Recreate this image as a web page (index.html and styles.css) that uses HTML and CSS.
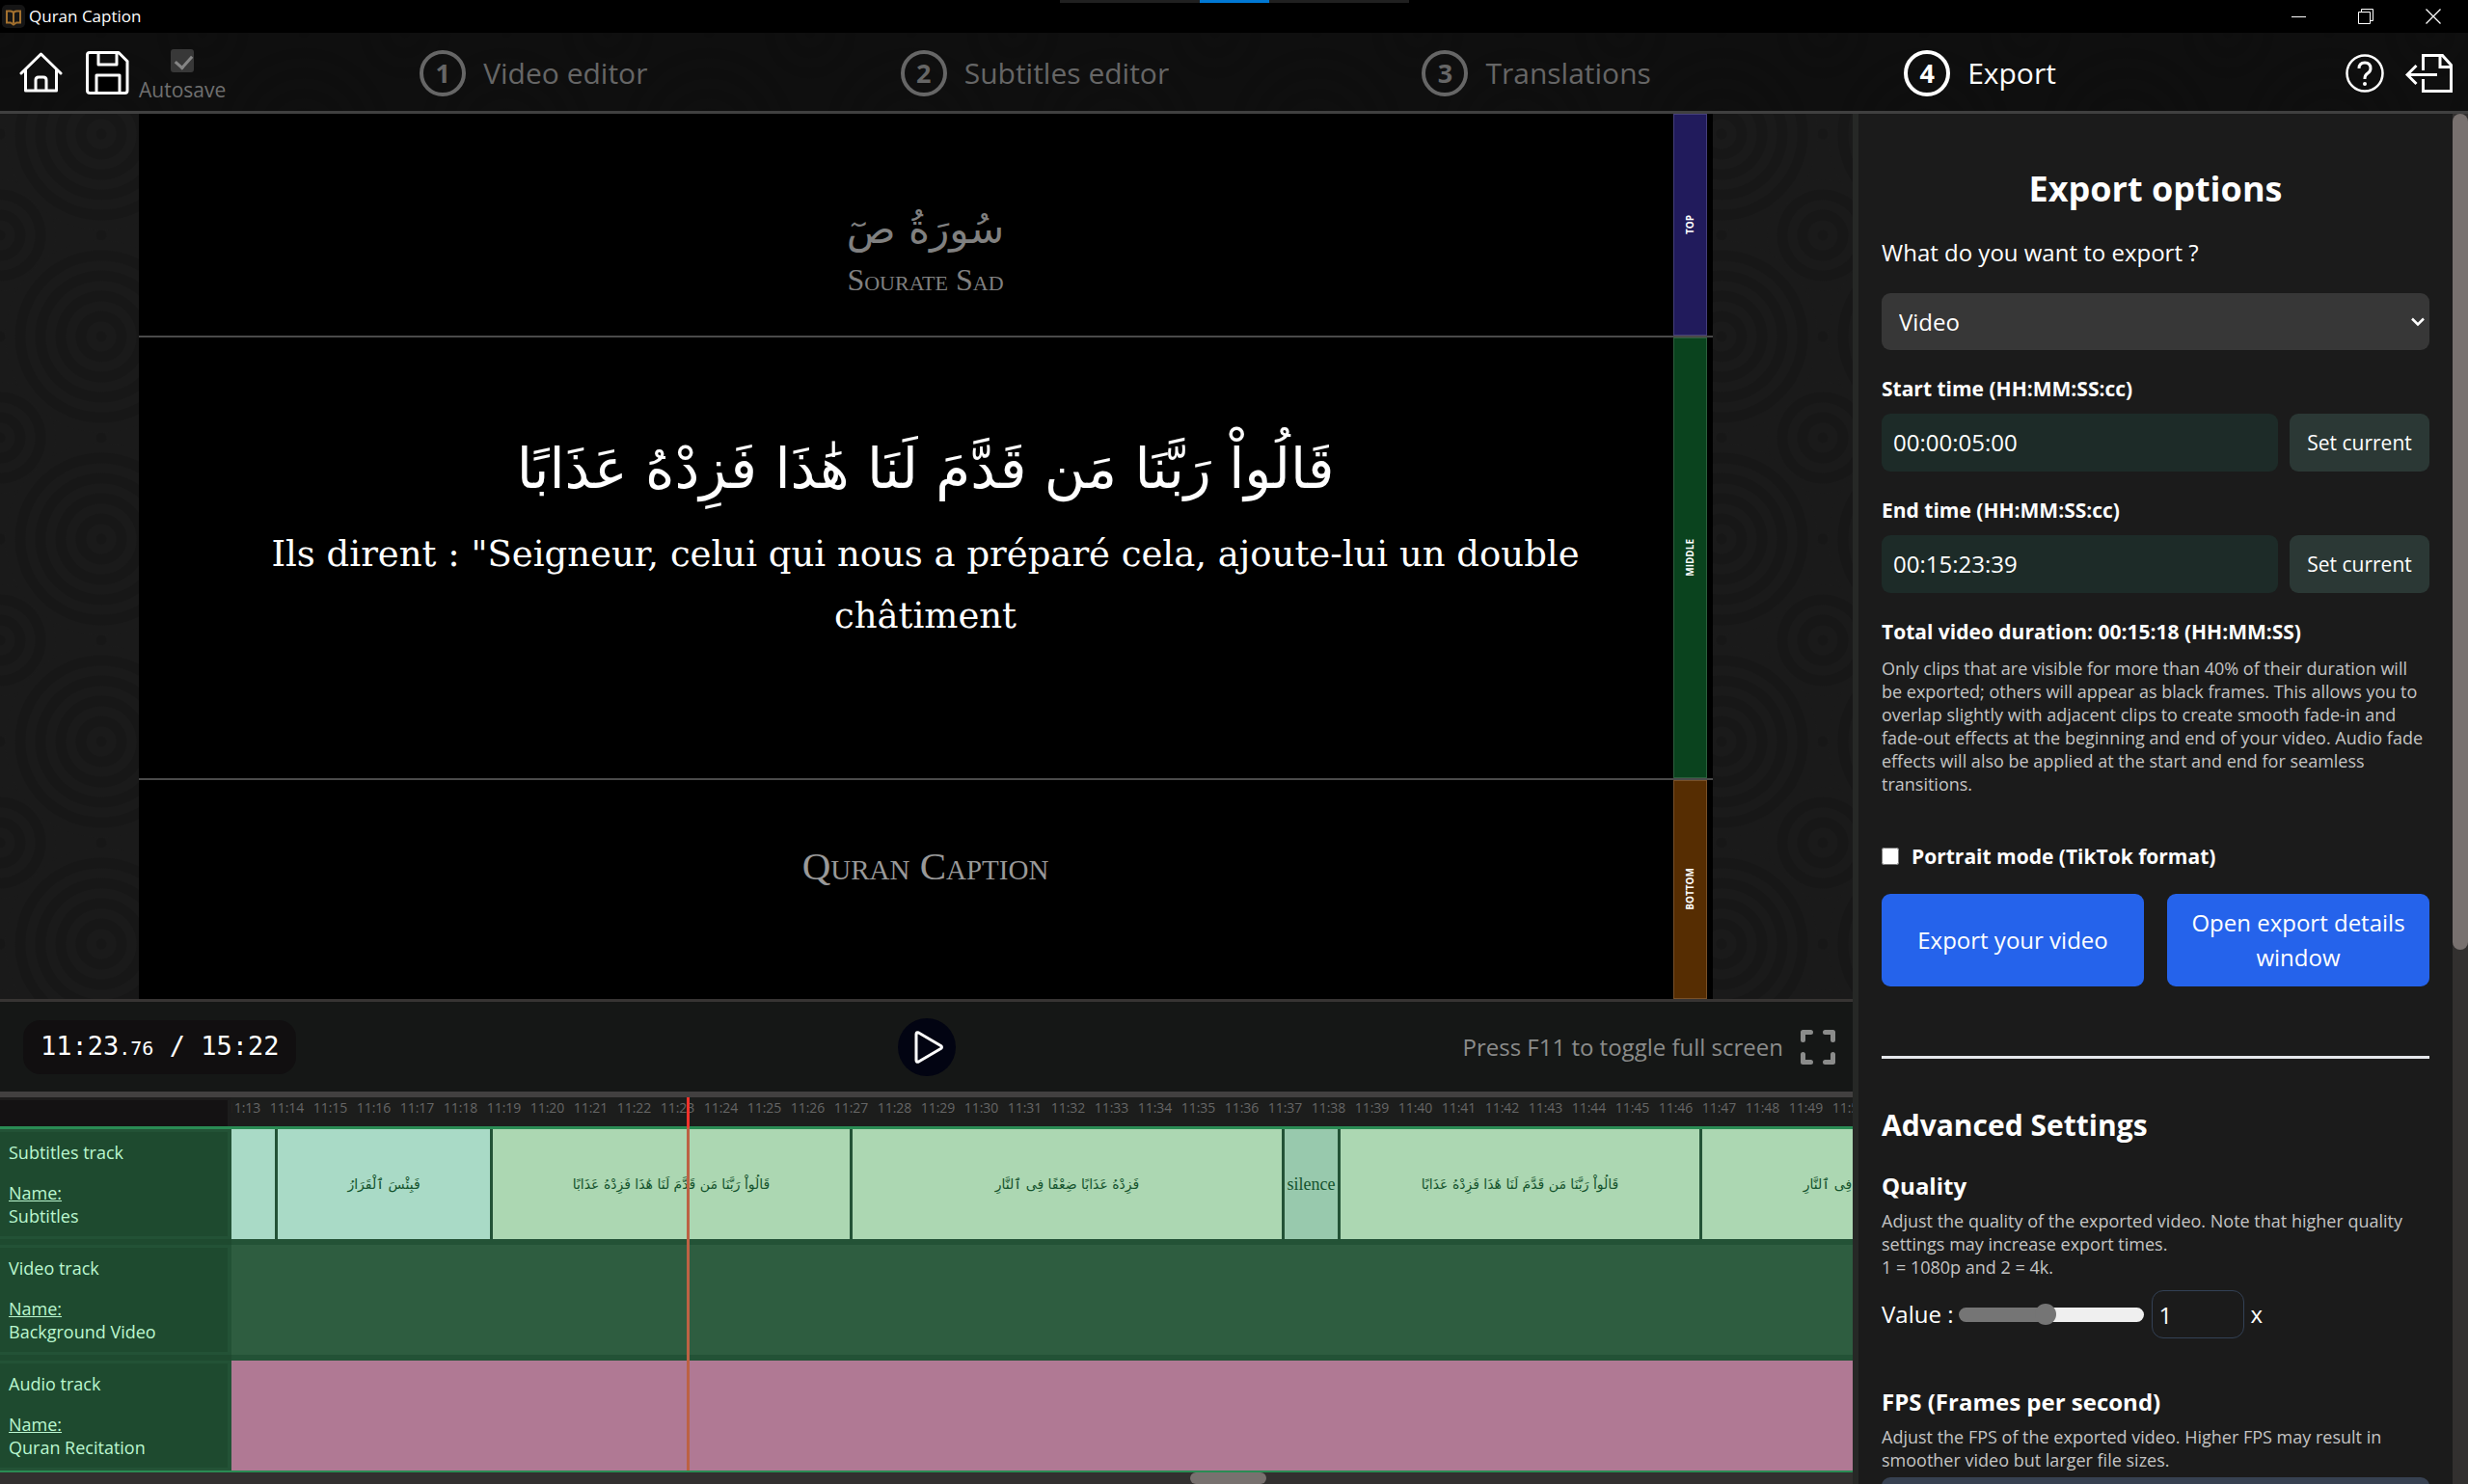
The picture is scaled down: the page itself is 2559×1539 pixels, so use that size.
FILE: index.html
```
<!DOCTYPE html>
<html lang="en">
<head>
<meta charset="utf-8">
<title>Quran Caption</title>
<link rel="stylesheet" href="styles.css">
</head>
<body>
<div class="titlebar">
  <div class="brand">
    <svg width="24" height="24" viewBox="0 0 24 24" fill="none" stroke="#a3712f" stroke-width="2"><rect width="24" height="24" rx="5" fill="#151515" stroke="none"/><path d="M5 6.500h3.500q3.500 0 3.500 2.500q0-2.500 3.500-2.500H19v12h-4l-3 2-3-2H5zM12 9v10"/></svg>
    <span>Quran Caption</span>
  </div>
  <div class="snap"><i></i></div>
  <div class="winbuttons">
    <button aria-label="Minimize"><svg width="15" height="16"><path d="M0 8.500h15" stroke="#fff"/></svg></button>
    <button aria-label="Restore"><svg width="16" height="16" fill="none" stroke="#fff"><path d="M.5 3.500h12v12H.5zM3.500 3.500v-3h12v12h-3"/></svg></button>
    <button aria-label="Close"><svg width="16" height="16" stroke="#fff" stroke-width="1.300"><path d="M.5.5l15 15M15.500.5l-15 15"/></svg></button>
  </div>
</div>
<div class="app">
<header class="header">
  <div class="tools">
    <button aria-label="Home"><svg width="45" height="45" viewBox="0 0 45 45" fill="none" stroke="#fff" stroke-width="3" stroke-linejoin="round" stroke-linecap="round"><path d="M2 23L22.500 3 43 23M6.500 19v22h32V19M17 41V30q0-3 3-3h5q3 0 3 3v11"/></svg></button>
    <button aria-label="Save"><svg width="45" height="45" viewBox="0 0 45 45" fill="#000" stroke="#fff" stroke-width="3" stroke-linejoin="round"><path d="M4 1.500h30l9 9v30.500q0 2.500-2.500 2.500h-36Q1.500 43.500 1.500 41V4q0-2.500 2.500-2.500zM13 2v12h19V2M11 43V25h24v18"/></svg></button>
    <label class="autosave"><input type="checkbox" checked disabled><span>Autosave</span></label>
  </div>
  <nav class="steps">
    <a href="#video"><b>1</b>Video editor</a>
    <a href="#subtitles"><b>2</b>Subtitles editor</a>
    <a href="#translations"><b>3</b>Translations</a>
    <a href="#export" class="current"><b>4</b>Export</a>
  </nav>
  <div class="actions">
    <button aria-label="Help"><svg width="40" height="40" viewBox="0 0 40 40" fill="none" stroke="#fff" stroke-width="2.500"><circle cx="20" cy="20" r="18.500"/><path d="M14 15q0-6 6-6t6 6q0 3-3 5t-3 5v1" stroke-width="3"/><circle cx="20" cy="31" r="2" fill="#fff" stroke="none"/></svg></button>
    <button aria-label="Exit project"><svg width="49" height="40" viewBox="0 0 49 40" fill="none" stroke="#fff" stroke-width="3"><path d="M18.500 17V1.500h20l9 10v27h-29V26M36 2v11.500h11M33 21.500H2M11.500 12l-9.500 9.500 9.500 9.500"/></svg></button>
  </div>
</header>
<main class="workspace">
  <section class="editor">
    <div class="preview">
      <div class="frame">
        <div class="zone top">
          <div class="zonetext">
            <p class="surah" lang="ar" dir="rtl">سُورَةُ صٓ</p>
            <p class="caps">Sourate Sad</p>
          </div>
          <div class="tag"><span>TOP</span></div>
        </div>
        <div class="zone middle">
          <div class="zonetext">
            <p class="verse" lang="ar" dir="rtl">قَالُواْ رَبَّنَا مَن قَدَّمَ لَنَا هَٰذَا فَزِدْهُ عَذَابًا</p>
            <p class="translation" lang="fr">Ils dirent : "Seigneur, celui qui nous a préparé cela, ajoute-lui un double châtiment</p>
          </div>
          <div class="tag"><span>MIDDLE</span></div>
        </div>
        <div class="zone bottom">
          <div class="zonetext"><p class="caps large">Quran Caption</p></div>
          <div class="tag"><span>BOTTOM</span></div>
        </div>
      </div>
    </div>
    <div class="controls">
      <div class="position"><div class="clock">11:23<small>.76</small> / 15:22</div></div>
      <button class="play" aria-label="Play"><svg width="60" height="60" viewBox="0 0 60 60" fill="none" stroke="#fff" stroke-width="3" stroke-linejoin="round"><path d="M19 16.500q0-2.500 2.500-1.500l23 13.500q2 1.500 0 3l-23 13.500q-2.500 1-2.500-1.500z"/></svg></button>
      <div class="full"><span>Press F11 to toggle full screen</span>
        <button aria-label="Full screen"><svg width="36" height="36" viewBox="0 0 36 36" fill="none" stroke="#8b8c8b" stroke-width="5" stroke-linecap="round" stroke-linejoin="round"><path d="M2.500 10.500v-8h8M25.500 2.500h8v8M33.500 25.500v8h-8M10.500 33.500h-8v-8"/></svg></button></div>
    </div>
    <div class="timeline">
      <div class="ruler">
        <div class="corner"></div>
        <ol><li>11:13</li><li>11:14</li><li>11:15</li><li>11:16</li><li>11:17</li><li>11:18</li><li>11:19</li><li>11:20</li><li>11:21</li><li>11:22</li><li>11:23</li><li>11:24</li><li>11:25</li><li>11:26</li><li>11:27</li><li>11:28</li><li>11:29</li><li>11:30</li><li>11:31</li><li>11:32</li><li>11:33</li><li>11:34</li><li>11:35</li><li>11:36</li><li>11:37</li><li>11:38</li><li>11:39</li><li>11:40</li><li>11:41</li><li>11:42</li><li>11:43</li><li>11:44</li><li>11:45</li><li>11:46</li><li>11:47</li><li>11:48</li><li>11:49</li><li>11:50</li></ol>
      </div>
      <div class="track">
        <div class="info"><p>Subtitles track</p><p><u>Name:</u><br>Subtitles</p></div>
        <div class="clips">
          <div class="clip mint" style="width:48px"></div>
          <div class="clip mint" lang="ar" dir="rtl" style="width:223px">فَبِئْسَ ٱلْقَرَارُ</div>
          <div class="clip" lang="ar" dir="rtl" style="width:373px">قَالُواْ رَبَّنَا مَن قَدَّمَ لَنَا هَٰذَا فَزِدْهُ عَذَابًا</div>
          <div class="clip" lang="ar" dir="rtl" style="width:448px">فَزِدْهُ عَذَابًا ضِعْفًا فِى ٱلنَّارِ</div>
          <div class="clip silence" style="width:58px">silence</div>
          <div class="clip" lang="ar" dir="rtl" style="width:375px">قَالُواْ رَبَّنَا مَن قَدَّمَ لَنَا هَٰذَا فَزِدْهُ عَذَابًا</div>
          <div class="clip" lang="ar" dir="rtl" style="width:362px">فَزِدْهُ عَذَابًا ضِعْفًا فِى ٱلنَّارِ</div>
        </div>
      </div>
      <div class="track">
        <div class="info"><p>Video track</p><p><u>Name:</u><br>Background Video</p></div>
        <div class="clips video"></div>
      </div>
      <div class="track">
        <div class="info"><p>Audio track</p><p><u>Name:</u><br>Quran Recitation</p></div>
        <div class="clips audio"></div>
      </div>
      <div class="playhead"></div>
    </div>
    <div class="hscroll"><i></i></div>
  </section>
  <aside class="side">
    <form class="panel">
      <h1>Export options</h1>
      <label class="question" for="kind">What do you want to export ?</label>
      <div class="select"><select id="kind"><option>Video</option></select>
        <svg width="14" height="10" viewBox="0 0 14 10" fill="none" stroke="#fff" stroke-width="2.500"><path d="M1 1.500l6 6 6-6"/></svg></div>
      <label class="strong" for="start">Start time (HH:MM:SS:cc)</label>
      <div class="time"><input id="start" type="text" value="00:00:05:00"><button type="button">Set current</button></div>
      <label class="strong" for="end">End time (HH:MM:SS:cc)</label>
      <div class="time"><input id="end" type="text" value="00:15:23:39"><button type="button">Set current</button></div>
      <p class="strong total">Total video duration: 00:15:18 (HH:MM:SS)</p>
      <p class="note">Only clips that are visible for more than 40% of their duration will be exported; others will appear as black frames. This allows you to overlap slightly with adjacent clips to create smooth fade-in and fade-out effects at the beginning and end of your video. Audio fade effects will also be applied at the start and end for seamless transitions.</p>
      <label class="strong portrait"><input type="checkbox">Portrait mode (TikTok format)</label>
      <div class="cta"><button type="button">Export your video</button><button type="button">Open export details window</button></div>
      <hr>
      <h2>Advanced Settings</h2>
      <h3>Quality</h3>
      <p class="note">Adjust the quality of the exported video. Note that higher quality settings may increase export times.<br>1 = 1080p and 2 = 4k.</p>
      <div class="value"><label for="quality">Value :</label><input id="quality" type="range" min="0" max="100" value="46"><input class="num" type="text" value="1" aria-label="Quality multiplier"><span>x</span></div>
      <h3>FPS (Frames per second)</h3>
      <p class="note">Adjust the FPS of the exported video. Higher FPS may result in smoother video but larger file sizes.</p>
      <select class="fps" aria-label="Frames per second"></select>
    </form>
    <div class="vscroll"><i></i></div>
  </aside>
</main>
</div>
</body>
</html>
```
FILE: styles.css
```
* { box-sizing: border-box; }
body {
  margin: 0;
  height: 100vh;
  display: flex;
  flex-direction: column;
  overflow: hidden;
  background: #000;
  color: #fff;
  font: 24px/36px "Open Sans", "Noto Sans", sans-serif;
}
p, h1, h2, h3, ol { margin: 0; padding: 0; }
svg { display: block; }
button, input, select { font: inherit; color: inherit; border: 0; margin: 0; padding: 0; background: none; }

/* window title bar */
.titlebar {
  height: 34px;
  flex: none;
  display: grid;
  grid-template-columns: 1fr 362px 1fr;
  font-size: 17px;
  line-height: 34px;
}
.brand { display: flex; align-items: center; gap: 4px; padding-left: 2px; }
.snap { height: 3px; background: #202020; display: flex; justify-content: center; }
.snap i { width: 72px; background: #0078d4; }
.winbuttons { display: flex; justify-content: flex-end; align-items: center; gap: 54px; padding-right: 28px; }

/* ringed wallpaper behind the whole app */
.app {
  flex: 1;
  min-height: 0;
  display: flex;
  flex-direction: column;
  background-color: #1a1a1a;
  background-image:
    radial-gradient(circle, #171717 5px, #1a1a1a 6px 15px, #171717 16px 26px, #1a1a1a 27px 36px, #171717 37px 47px, #1a1a1a 48px 57px, #171717 58px 68px, #1a1a1a 69px 78px, #171717 79px 89px, #1a1a1a 90px 99px, transparent 100px),
    radial-gradient(circle, #171717 5px, #1a1a1a 6px 15px, #171717 16px 26px, #1a1a1a 27px 36px, #171717 37px 47px, #1a1a1a 48px 57px, transparent 58px),
    radial-gradient(circle, #171717 5px, transparent 6px),
    radial-gradient(circle, #171717 5px, transparent 6px);
  background-size: 210px 210px;
  background-position: 0 0, 105px 105px, 0 105px, 105px 0;
}

.header {
  height: 84px;
  flex: none;
  display: grid;
  grid-template-columns: 304px 1fr 296px;
  align-items: center;
  padding-top: 2px;
  background: rgba(9, 9, 9, .6);
  border-bottom: 3px solid #404040;
}
.tools { display: flex; align-items: center; gap: 24px; padding-left: 20px; }
.autosave {
  display: flex;
  flex-direction: column;
  align-items: center;
  gap: 3px;
  margin: 2px 0 0 -14px;
  font-size: 21px;
  line-height: 30px;
  color: #707070;
}
.autosave input { appearance: none; width: 24px; height: 24px; margin-top: 5px; border-radius: 3px; background: #383838; position: relative; }
.autosave input::after {
  content: "";
  position: absolute;
  left: 8px;
  top: 3px;
  width: 8px;
  height: 14px;
  border: solid #858585;
  border-width: 0 3px 3px 0;
  transform: rotate(42deg);
}
.steps { display: flex; justify-content: space-around; }
.steps a { display: flex; align-items: center; gap: 18px; font-size: 30px; color: #666; text-decoration: none; }
.steps b {
  width: 48px;
  height: 48px;
  border: 4px solid;
  border-radius: 50%;
  font-size: 27px;
  line-height: 40px;
  text-align: center;
}
.steps .current { color: #fff; }
.actions { display: flex; justify-content: flex-end; align-items: center; gap: 22px; padding-right: 16px; }

.workspace { flex: 1; min-height: 0; display: grid; grid-template-columns: minmax(0, 1fr) 638px; }
.editor { display: flex; flex-direction: column; min-height: 0; }

/* video preview */
.preview { flex: 1; min-height: 0; display: flex; justify-content: center; padding-right: 2px; }
.frame { height: 100%; aspect-ratio: 16 / 9; display: grid; grid-template-rows: 1fr 2fr 1fr; background: #000; }
.zone { display: grid; grid-template-columns: 1fr 35px; min-height: 0; padding-right: 6px; }
.zone + .zone { border-top: 2px solid #4a4a4a; }
.zonetext { display: flex; flex-direction: column; justify-content: center; align-items: center; padding-left: 41px; text-align: center; }
.tag { display: grid; place-items: center; border: 1px solid; font-size: 10px; font-weight: 700; line-height: 12px; }
.tag span { writing-mode: vertical-rl; transform: rotate(180deg); }
.top .tag { background: #211b5c; border-color: #453f7a; }
.middle .tag { background: #0a431e; border-color: #2d5f3d; }
.bottom .tag { background: #562d02; border-color: #785028; }
.surah { font: 42px/64px "DejaVu Sans", sans-serif; color: #808080; }
.top .zonetext { padding-top: 50px; }
.caps { font: small-caps 32px/40px "Liberation Serif", serif; color: #808080; }
.caps.large { font-size: 41px; color: #999; padding-bottom: 48px; }
.verse { font: 58px/114px "DejaVu Sans", sans-serif; }
.translation { font: 37px/64px "DejaVu Serif", serif; max-width: 1400px; }
.middle .zonetext { padding-bottom: 56px; }

/* transport bar */
.controls {
  height: 102px;
  flex: none;
  display: grid;
  grid-template-columns: 1fr 60px 1fr;
  align-items: center;
  padding: 0 18px;
  background: #151716;
  border-top: 3px solid #373433;
  border-bottom: 6px solid #424040;
}
.position { padding-left: 6px; }
.clock {
  display: inline-block;
  padding: 0 18px;
  border-radius: 18px;
  background: #110f10;
  font: 27px/54px "DejaVu Sans Mono", monospace;
}
.clock small { font-size: 20px; }
.play { border-radius: 50%; background: #020412; }
.full { display: flex; justify-content: flex-end; align-items: center; gap: 18px; color: #8b8c8b; }

/* timeline */
.timeline { flex: none; position: relative; overflow: hidden; background: #1e4a2f; border-bottom: 2px solid #2a8c54; }
.ruler { display: flex; height: 33px; background: #1c1d1c; border-bottom: 3px solid #2a8c54; }
.corner { width: 240px; flex: none; background: #141213; border-top: 3px solid #1c1b1b; border-right: 4px solid #1c1c1c; z-index: 1; }
.ruler ol { display: flex; list-style: none; margin-left: -10px; font-size: 14px; line-height: 22px; color: #666; }
.ruler li { width: 45px; flex: none; text-align: center; }
.track { display: flex; height: 114px; }
.track + .track { margin-top: 6px; }
.info {
  width: 240px;
  flex: none;
  border: solid #235236;
  border-width: 3px 4px 3px 0;
  padding: 9px;
  display: flex;
  flex-direction: column;
  gap: 18px;
  font-size: 18px;
  line-height: 24px;
  color: #bbf7d0;
}
.clips { flex: 1; min-width: 0; display: flex; overflow: hidden; background: #235236; }
.clip {
  flex: none;
  display: grid;
  place-items: center;
  white-space: nowrap;
  background: #acd7b2;
  border-right: 3px solid #235236;
  color: #14532d;
  font: 14px/30px "DejaVu Sans", sans-serif;
}
.mint { background: #a9dac6; }
.silence { background: #98c9ad; font: 18px/30px "Liberation Serif", serif; }
.video { background: #2e5d40; }
.audio { background: #b07994; }
.track + .track .clips { box-shadow: 0 -6px #235236; overflow: visible; }
.playhead { position: absolute; top: 0; bottom: 0; left: 712px; width: 3px; background: linear-gradient(#f0322b 30px, #bc6244 33px); }
.hscroll { height: 12px; flex: none; background: #32302f; padding-left: 1234px; display: flex; }
.hscroll i { width: 79px; border-radius: 6px; background: #78716f; }

/* export panel */
.side { display: flex; min-height: 0; overflow: hidden; background: #1b1b1b; border-left: 6px solid #262826; }
.panel { flex: 1; min-width: 0; padding: 54px 24px 0; display: flex; flex-direction: column; }
.panel > * { flex: none; }
.vscroll { width: 16px; flex: none; background: #32302f; display: flex; flex-direction: column; }
.vscroll i { height: 61%; border-radius: 8px; background: #78716f; }
h1 { font-size: 36px; line-height: 48px; text-align: center; }
.question { margin-top: 24px; }
.select { display: grid; margin: 24px 0; align-items: center; }
.select > * { grid-area: 1 / 1; }
.select select { appearance: none; height: 59px; border-radius: 9px; padding: 0 18px; background: #373737; }
.select svg { justify-self: end; margin-right: 5px; }
.strong { font-size: 21px; line-height: 32px; font-weight: 700; }
.time { display: grid; grid-template-columns: 1fr 145px; gap: 12px; margin: 10px 0 24px; height: 60px; }
.time input { min-width: 0; border-radius: 9px; padding: 0 12px; background: #1d2b28; }
.time button { border-radius: 9px; background: #2b3835; font-size: 21px; }
.total { margin-bottom: 10px; }
.note { font-size: 18px; line-height: 24px; color: #c4c4c4; }
.portrait { display: flex; align-items: center; gap: 13px; margin: 47px 0 23px; }
.portrait input { width: 18px; height: 18px; }
.cta { display: grid; grid-template-columns: 1fr 1fr; gap: 24px; height: 96px; }
.cta button { border-radius: 9px; background: #2563eb; padding: 0 18px; }
hr { width: 100%; height: 3px; margin: 72px 0 48px; border: 0; background: #e5e7eb; }
h2 { font-size: 30px; line-height: 42px; }
h3 { font-size: 24px; line-height: 36px; margin: 24px 0 6px; }
.value { display: flex; align-items: center; margin: 12px 0 24px; }
.value input[type="range"] { appearance: none; width: 192px; height: 29px; margin: 0 8px 0 6px; }
.value input[type="range"]::-webkit-slider-runnable-track {
  height: 15px;
  border-radius: 8px;
  background: linear-gradient(90deg, #757575 46%, #efefef 46%);
}
.value input[type="range"]::-webkit-slider-thumb { appearance: none; width: 22px; height: 22px; margin-top: -4px; border-radius: 50%; background: #757575; }
.value .num { width: 96px; height: 50px; border: 1px solid #334155; border-radius: 12px; padding: 0 6px; }
.value span { margin-left: 6px; }
.fps { appearance: none; height: 59px; margin-top: 6px; border-radius: 9px; background: #374151; }
```
